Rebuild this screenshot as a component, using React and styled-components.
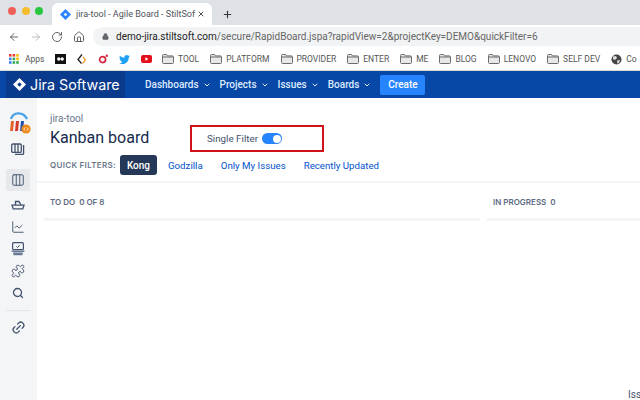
import React from "react"
import styled, { createGlobalStyle } from "styled-components"
import {
  ArrowLeft,
  ArrowRight,
  RotateCw,
  Home,
  Lock,
  X,
  Plus,
  ChevronDown,
  Columns3,
  ChartLine,
  Puzzle,
  Search,
  Link2,
} from "lucide-react"

const GlobalStyle = createGlobalStyle`
  html, body {
    margin: 0;
    padding: 0;
    background: #fff;
    overflow: hidden;
  }
  body {
    font-family: Roboto, "Liberation Sans", sans-serif;
  }
`

const folders = ["TOOL", "PLATFORM", "PROVIDER", "ENTER", "ME", "BLOG", "LENOVO", "SELF DEV"]
const navItems = ["Dashboards", "Projects", "Issues", "Boards"]
const filters = ["Godzilla", "Only My Issues", "Recently Updated"]

const JiraDiamond = ({ size = 12, color = "#2684ff" }) => (
  <svg width={size} height={size} viewBox="0 0 12 12">
    <path d="M6 0 12 6 6 12 0 6Z" fill={color} />
    <path d="M6 4 8 6 6 8 4 6Z" fill={color === "#fff" ? "#0a3a8c" : "#fff"} />
  </svg>
)

const Folder = () => (
  <svg width="12" height="10" viewBox="0 0 12 10">
    <path d="M.5 1.500c0-.6.4-1 1-1h3l1 1.400h5c.6 0 1 .4 1 1v5.600c0 .6-.4 1-1 1h-9c-.6 0-1-.4-1-1Z" fill="#e8e8e8" stroke="#6b6b6b" />
    <path d="M1 3h10" stroke="#6b6b6b" />
  </svg>
)

const AppsGrid = () => (
  <svg width="10" height="10" viewBox="0 0 10 10">
    {[0, 1, 2].map((r) =>
      [0, 1, 2].map((c) => (
        <rect
          key={`${r}-${c}`}
          x={c * 3.6}
          y={r * 3.6}
          width="2.6"
          height="2.6"
          fill={[["#ea4335", "#ea4335", "#fbbc04"], ["#4285f4", "#34a853", "#fbbc04"], ["#4285f4", "#34a853", "#34a853"]][r][c]}
        />
      ))
    )}
  </svg>
)

const AddonLogo = () => (
  <svg width="23" height="24" viewBox="0 0 23 24">
    <path d="M3 9C5 2 15 1 19 9" fill="none" stroke="#4aa3e8" strokeWidth="2.4" />
    <path d="M2 21 3 11h3l-1 10Z" fill="#e9622b" />
    <path d="M7 21 8 11h3l-1 10Z" fill="#d8382c" />
    <path d="M12 21 13 11h3l-1 10Z" fill="#2450a8" />
    <circle cx="18" cy="19" r="4.6" fill="#f08a1d" />
    <path d="M17 17.500 15.800 19l1.200 1.500M19 17.500l1.200 1.500-1.200 1.500" fill="none" stroke="#fff" strokeWidth=".8" />
  </svg>
)

const BacklogIcon = () => (
  <svg width="14" height="14" viewBox="0 0 14 14" fill="none" stroke="#42526e" strokeWidth="1.3">
    <rect x=".7" y="2" width="9.6" height="8.4" rx="1.2" />
    <path d="M4 2v8.400M7 2v8.400" />
    <path d="M12.600 3v8.200c0 .8-.5 1.200-1.200 1.200H4" />
  </svg>
)

const ActiveSprintBoat = () => (
  <svg width="14" height="14" viewBox="0 0 14 14" fill="none" stroke="#42526e" strokeWidth="1.3">
    <path d="M4.500 7V3.500h3.500L10 7" />
    <path d="M1 7.200h12l-1.200 3.600H2.200Z" />
  </svg>
)

const ReleaseIcon = () => (
  <svg width="14" height="14" viewBox="0 0 14 14">
    <rect x="1.600" y=".7" width="10.800" height="7" rx="1" fill="none" stroke="#42526e" strokeWidth="1.2" />
    <path d="M5.400 4.400 6.600 5.500 8.600 3.200" fill="none" stroke="#42526e" strokeWidth="1" />
    <path d="M.6 8.500h12.800v1.600H.6ZM2 10.600h10l-.6 2.700H2.600Z" fill="#6b7a94" />
  </svg>
)

const App = () => (
  <>
    <GlobalStyle />
    <Page>
      <TabStrip>
        <Lights>
          <Light color="#ee5f57" />
          <Light color="#f5bd2e" />
          <Light color="#27c840" />
        </Lights>
        <Tab>
          <JiraDiamond size={11} />
          <TabTitle>jira-tool - Agile Board - StiltSof</TabTitle>
          <X size={8} strokeWidth={2.6} color="#333" />
        </Tab>
        <NewTab>
          <Plus size={11} strokeWidth={2.4} color="#333" />
        </NewTab>
      </TabStrip>

      <Toolbar>
        <ToolIcons>
          <ArrowLeft size={12} strokeWidth={1.8} color="#555" />
          <ArrowRight size={12} strokeWidth={1.8} color="#b4b4b4" />
          <RotateCw size={12} strokeWidth={1.8} color="#555" />
          <Home size={12} strokeWidth={1.8} color="#555" />
        </ToolIcons>
        <AddressBar>
          <Lock size={7} color="#5f6368" fill="#5f6368" />
          <Url>
            <Host>demo-jira.stiltsoft.com</Host>
            /secure/RapidBoard.jspa?rapidView=2&projectKey=DEMO&quickFilter=6
          </Url>
        </AddressBar>
      </Toolbar>

      <Bookmarks>
        <Bookmark $width={46}>
          <AppsGrid />
          <span>Apps</span>
        </Bookmark>
        <BookmarkIcon>
          <svg width="11" height="10" viewBox="0 0 11 10">
            <rect width="11" height="10" fill="#111" />
            <circle cx="3.800" cy="5" r="1.700" fill="#fff" />
            <circle cx="7.200" cy="5" r="1.700" fill="#fff" />
          </svg>
        </BookmarkIcon>
        <BookmarkIcon>
          <svg width="11" height="11" viewBox="0 0 11 11" fill="none">
            <path d="M6 .5 2 5.500l3.500 4" stroke="#222" strokeWidth="1.3" />
            <path d="M7 3 9.500 6 6.500 9.500" stroke="#f0a030" strokeWidth="1.3" />
          </svg>
        </BookmarkIcon>
        <BookmarkIcon>
          <svg width="11" height="10" viewBox="0 0 11 10" fill="none">
            <circle cx="4.600" cy="5.600" r="3" stroke="#d7263d" strokeWidth="1.7" />
            <circle cx="8.800" cy="1.800" r="1.200" fill="#d7263d" />
          </svg>
        </BookmarkIcon>
        <BookmarkIcon>
          <svg width="11" height="9" viewBox="0 0 24 20">
            <path d="M24 2.400c-.9.4-1.800.7-2.800.8 1-.6 1.800-1.600 2.200-2.700-1 .6-2 1-3.100 1.200C19.300.7 18 0 16.600 0c-2.700 0-4.900 2.200-4.900 4.900 0 .4 0 .8.100 1.100C7.700 5.800 4.100 3.900 1.700.9 1.200 1.600 1 2.500 1 3.400c0 1.700.9 3.200 2.200 4.100-.8 0-1.600-.2-2.200-.6v.1c0 2.400 1.700 4.400 3.900 4.800-.7.200-1.500.2-2.200.1.600 2 2.400 3.400 4.600 3.400C5.600 17.400 3 18.400.1 18.100 2.300 19.300 4.800 20 7.500 20c9 0 14-7.500 14-14v-.6c1-.7 1.800-1.600 2.500-3Z" fill="#1da1f2" />
          </svg>
        </BookmarkIcon>
        <BookmarkIcon>
          <svg width="11" height="8" viewBox="0 0 11 8">
            <rect width="11" height="8" rx="2" fill="#e3101b" />
            <path d="M4.400 2.200 7.400 4 4.400 5.800Z" fill="#fff" />
          </svg>
        </BookmarkIcon>
        {folders.map((name) => (
          <Bookmark key={name}>
            <Folder />
            <span>{name}</span>
          </Bookmark>
        ))}
        <Bookmark>
          <svg width="11" height="11" viewBox="0 0 11 11">
            <circle cx="5.500" cy="5.500" r="5" fill="#444" />
            <path d="M2 2.500 5 2 6 4 4 6 2 5ZM6 6.500 9 6 8 9 6.500 9.500Z" fill="#ddd" />
          </svg>
          <span>Co</span>
        </Bookmark>
      </Bookmarks>

      <JiraNav>
        <Brand>
          <JiraDiamond size={13} color="#fff" />
          <BrandName>Jira Software</BrandName>
        </Brand>
        <NavLinks>
          {navItems.map((item) => (
            <NavItem key={item}>
              {item}
              <ChevronDown size={8} strokeWidth={3} />
            </NavItem>
          ))}
          <CreateButton>Create</CreateButton>
        </NavLinks>
      </JiraNav>

      <Body>
        <Sidebar>
          <LogoSlot>
            <AddonLogo />
          </LogoSlot>
          <SideIcon>
            <BacklogIcon />
          </SideIcon>
          <SideIcon $active>
            <Columns3 size={14} strokeWidth={1.6} color="#42526e" />
          </SideIcon>
          <SideIcon>
            <ActiveSprintBoat />
          </SideIcon>
          <SideIcon>
            <ChartLine size={14} strokeWidth={1.6} color="#42526e" />
          </SideIcon>
          <SideIcon>
            <ReleaseIcon />
          </SideIcon>
          <SideIcon>
            <Puzzle size={14} strokeWidth={1.6} color="#42526e" />
          </SideIcon>
          <SideIcon>
            <Search size={12} strokeWidth={2.6} color="#42526e" />
          </SideIcon>
          <SideDivider />
          <SideIcon>
            <LinkGlyph size={15} strokeWidth={2} color="#42526e" />
          </SideIcon>
        </Sidebar>

        <Main>
          <BoardHeader>
            <Project>jira-tool</Project>
            <TitleRow>
              <Title>Kanban board</Title>
              <SingleFilter>
                <span>Single Filter</span>
                <Toggle />
              </SingleFilter>
            </TitleRow>
            <FilterRow>
              <FilterLabel>QUICK FILTERS:</FilterLabel>
              <ActiveFilter>Kong</ActiveFilter>
              {filters.map((f) => (
                <FilterLink key={f}>{f}</FilterLink>
              ))}
            </FilterRow>
          </BoardHeader>
          <Columns>
            <Column $width={436}>
              <ColumnTitle>TO DO&nbsp; 0 OF 8</ColumnTitle>
              <ColumnBar />
            </Column>
            <Column>
              <ColumnTitle>IN PROGRESS&nbsp; 0</ColumnTitle>
              <ColumnBar />
            </Column>
          </Columns>
        </Main>
      </Body>
      <Cutoff>Iss</Cutoff>
    </Page>
  </>
)

export default App

const LinkGlyph = styled(Link2)`
  transform: rotate(-45deg);
`

const Page = styled.div`
  position: relative;
  width: 640px;
  height: 400px;
  overflow: hidden;
  display: flex;
  flex-direction: column;
  background: #fff;
`

const TabStrip = styled.div`
  height: 25px;
  background: #dee1e6;
  display: flex;
  align-items: flex-end;
  flex-shrink: 0;
`

const Lights = styled.div`
  width: 52px;
  height: 22px;
  padding-left: 8px;
  box-sizing: border-box;
  display: flex;
  gap: 5.5px;
  align-items: center;
  padding-bottom: 6px;
`

const Light = styled.span`
  width: 8px;
  height: 8px;
  border-radius: 50%;
  background: ${(props) => props.color};
`

const Tab = styled.div`
  width: 160px;
  height: 22px;
  box-sizing: border-box;
  background: #fff;
  border-radius: 6px 6px 0 0;
  display: flex;
  align-items: center;
  padding: 0 7px 0 8px;
  gap: 5px;

  svg {
    flex-shrink: 0;
  }
`

const TabTitle = styled.span`
  flex: 1;
  min-width: 0;
  font-size: 9px;
  color: #50545a;
  white-space: nowrap;
`

const NewTab = styled.div`
  width: 30px;
  height: 22px;
  display: flex;
  align-items: center;
  justify-content: center;
`

const Toolbar = styled.div`
  height: 22px;
  display: flex;
  align-items: center;
  background: #fff;
  flex-shrink: 0;
  padding-top: 1px;
  box-sizing: border-box;
`

const ToolIcons = styled.div`
  width: 93px;
  box-sizing: border-box;
  padding-left: 8px;
  display: flex;
  align-items: center;
  gap: 9.5px;
`

const AddressBar = styled.div`
  flex: 1;
  height: 19px;
  background: #f1f3f4;
  border-radius: 10px 0 0 10px;
  display: flex;
  align-items: center;
  gap: 7px;
  padding-left: 9px;
`

const Url = styled.span`
  font-size: 10px;
  color: #666;
  white-space: nowrap;
`

const Host = styled.span`
  color: #222;
`

const Bookmarks = styled.div`
  height: 24px;
  display: flex;
  align-items: center;
  padding-left: 9px;
  background: #fff;
  flex-shrink: 0;
  white-space: nowrap;
  box-shadow: inset 0 -1px 0 #d8d8d8;
`

const Bookmark = styled.div`
  display: flex;
  flex-shrink: 0;
  align-items: center;
  gap: 4px;
  font-size: 8.5px;
  color: #555;
  margin-right: 11px;
  ${(props) => props.$width && `width: ${props.$width}px; margin-right: 0; gap: 6px;`}
`

const BookmarkIcon = styled.div`
  width: 21.4px;
  flex-shrink: 0;
  display: flex;
  align-items: center;
`

const JiraNav = styled.div`
  height: 27px;
  background: #0747a6;
  display: flex;
  padding-left: 6px;
  flex-shrink: 0;
`

const Brand = styled.div`
  width: 119px;
  box-sizing: border-box;
  background: #0a3a8c;
  display: flex;
  align-items: center;
  gap: 4px;
  padding-left: 7px;
`

const BrandName = styled.span`
  font-family: Inter, sans-serif;
  font-size: 14.3px;
  color: #fff;
  white-space: nowrap;
`

const NavLinks = styled.div`
  display: flex;
  align-items: center;
  padding-left: 20px;
`

const NavItem = styled.div`
  display: flex;
  align-items: center;
  gap: 4px;
  margin-right: 9px;
  font-size: 10px;
  font-weight: 500;
  color: #deebff;
  white-space: nowrap;
`

const CreateButton = styled.div`
  width: 45px;
  height: 20px;
  border-radius: 2px;
  background: #2684ff;
  color: #fff;
  font-size: 10px;
  font-weight: 500;
  display: flex;
  align-items: center;
  justify-content: center;
`

const Body = styled.div`
  flex: 1;
  display: flex;
  min-height: 0;
`

const Sidebar = styled.div`
  width: 37px;
  flex-shrink: 0;
  background: #f4f5f7;
  display: flex;
  flex-direction: column;
  align-items: flex-start;
  padding: 12px 0 0 6px;
  box-sizing: border-box;
`

const LogoSlot = styled.div`
  width: 24px;
  height: 24px;
  margin-bottom: 4px;
  margin-left: 2px;
`

const SideIcon = styled.div`
  width: 24px;
  height: 22px;
  display: flex;
  align-items: center;
  justify-content: center;
  border-radius: 2px;
  background: ${(props) => (props.$active ? "#e6e8ec" : "transparent")};
  margin-bottom: ${(props) => (props.$active ? "3px" : "0")};
  &:nth-child(2) {
    margin-bottom: 9px;
  }
`

const SideDivider = styled.div`
  width: 24px;
  height: 1px;
  background: #e3e5e9;
  margin: 6px 0 5px;
`

const Main = styled.div`
  flex: 1;
  min-width: 0;
`

const BoardHeader = styled.div`
  height: 85px;
  box-sizing: border-box;
  padding: 15px 0 0 13px;
  border-bottom: 2px solid #f4f5f7;
`

const Project = styled.div`
  font-size: 10px;
  line-height: 11px;
  margin-bottom: 1px;
  color: #6b778c;
`

const TitleRow = styled.div`
  display: flex;
  align-items: center;
  height: 27px;
`

const Title = styled.div`
  width: 140px;
  padding-bottom: 2px;
  font-size: 16px;
  color: #172b4d;
  white-space: nowrap;
`

const SingleFilter = styled.div`
  width: 134px;
  height: 27px;
  box-sizing: border-box;
  border: 2px solid #d0121b;
  display: flex;
  align-items: center;
  gap: 4px;
  padding-left: 15px;
  font-size: 9.8px;
  color: #42526e;
`

const Toggle = styled.span`
  position: relative;
  width: 20px;
  height: 11px;
  border-radius: 6px;
  background: #2684ff;
  &::after {
    content: "";
    position: absolute;
    right: 1.5px;
    top: 1.5px;
    width: 8px;
    height: 8px;
    border-radius: 50%;
    background: #fff;
  }
`

const FilterRow = styled.div`
  display: flex;
  align-items: center;
  margin-top: 3px;
`

const FilterLabel = styled.span`
  width: 70px;
  font-family: Inter, sans-serif;
  font-size: 8px;
  font-weight: 600;
  letter-spacing: 0.3px;
  color: #6b778c;
  white-space: nowrap;
`

const ActiveFilter = styled.span`
  width: 37px;
  height: 20px;
  border-radius: 3px;
  background: #253858;
  color: #fff;
  font-size: 10px;
  font-weight: 500;
  display: flex;
  align-items: center;
  justify-content: center;
  margin-right: 11px;
`

const FilterLink = styled.span`
  font-size: 9.7px;
  color: #0052cc;
  margin-right: 18px;
  white-space: nowrap;
`

const Columns = styled.div`
  display: flex;
  gap: 7px;
  padding-left: 7px;
`

const Column = styled.div`
  flex-shrink: 0;
  width: ${(props) => (props.$width ? `${props.$width}px` : "160px")};
`

const ColumnTitle = styled.div`
  height: 35px;
  box-sizing: border-box;
  padding: 14px 0 0 6px;
  font-family: Inter, sans-serif;
  font-size: 8px;
  font-weight: 600;
  line-height: 10px;
  color: #5e6c84;
  white-space: nowrap;
`

const ColumnBar = styled.div`
  height: 3px;
  background: #f4f5f7;
`

const Cutoff = styled.span`
  position: absolute;
  left: 628px;
  top: 389px;
  font-size: 10px;
  color: #42526e;
`
